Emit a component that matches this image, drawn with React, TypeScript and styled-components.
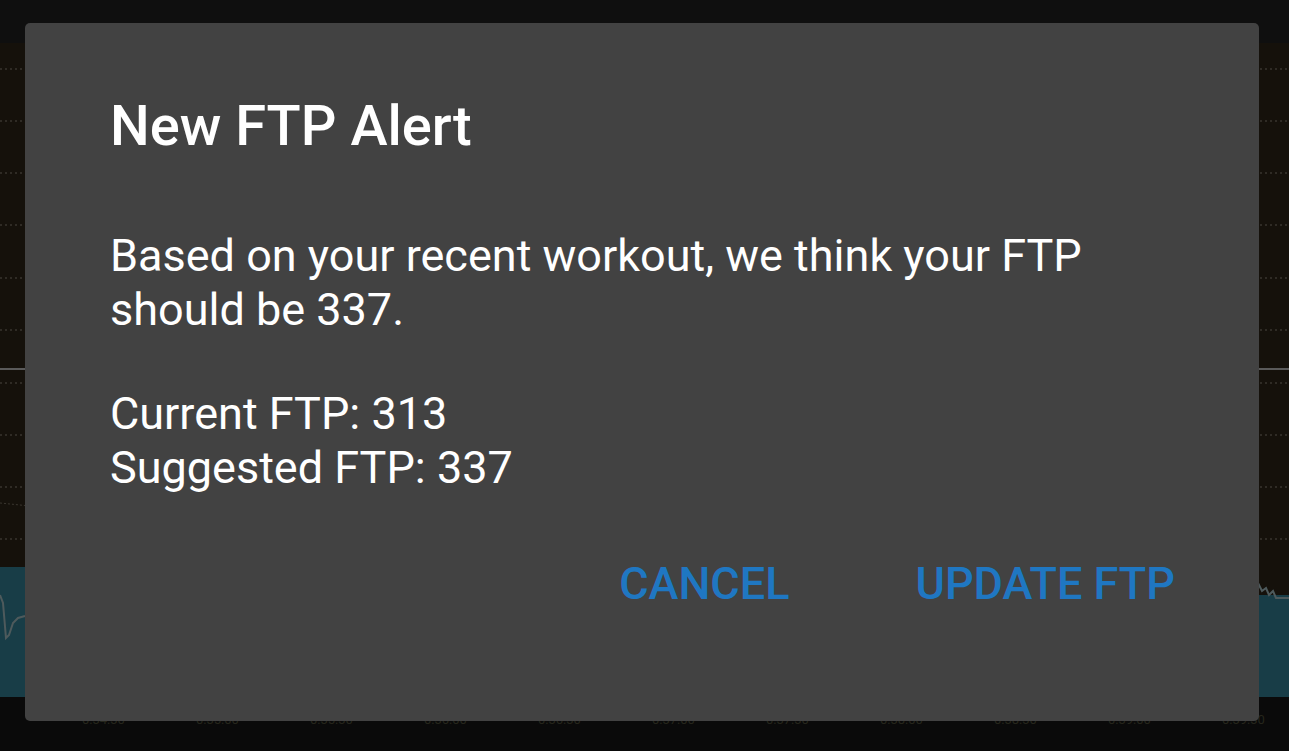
import styled, { createGlobalStyle } from "styled-components";

const GlobalStyle = createGlobalStyle`
    html, body {
        margin: 0;
        padding: 0;
        background: #0e0e0e;
    }
    * {
        box-sizing: border-box;
    }
`;

const Screen = styled.div`
    position: relative;
    display: flex;
    flex-direction: column;
    width: 1289px;
    height: 751px;
    overflow: hidden;
    font-family: Roboto, "Noto Sans", sans-serif;
    background-color: #0e0e0e;
`;
const TopBar = styled.div`
    height: 43px;
    flex-shrink: 0;
    background-color: #0f0f0f;
`;
const ChartArea = styled.div`
    flex: 1;
    background-color: #15110b;
    svg {
        display: block;
    }
`;
const TimeAxis = styled.div`
    display: flex;
    height: 54px;
    flex-shrink: 0;
    padding-left: 82px;
    gap: 66px;
    background-color: #0a0a0a;
`;
const TimeLabel = styled.span`
    width: 48px;
    padding-top: 15px;
    font-size: 13px;
    color: #26261c;
`;
const Overlay = styled.div`
    position: absolute;
    inset: 0;
    display: flex;
    padding: 23px 30px 30px 25px;
`;
const Dialog = styled.div`
    flex: 1;
    display: flex;
    flex-direction: column;
    padding: 70px 84px 0px 85px;
    border-radius: 5px;
    background-color: #424242;
    color: #ffffff;
`;
const Title = styled.h1`
    margin: 0;
    font-size: 56px;
    line-height: 66px;
    font-weight: 500;
`;
const Message = styled.p<{ $gap: number }>`
    margin: ${(props) => props.$gap}px 0 0 0;
    font-size: 45px;
    line-height: 54px;
    font-weight: 400;
`;
const Actions = styled.div`
    display: flex;
    justify-content: flex-end;
    gap: 126px;
    margin-top: 62px;
`;
const ActionBtn = styled.button`
    padding: 0;
    border: none;
    background: none;
    font-family: Roboto, "Noto Sans", sans-serif;
    font-size: 45px;
    line-height: 54px;
    font-weight: 500;
    text-transform: uppercase;
    color: #1f77c2;
`;

const gridRows = [26, 78, 130, 182, 235, 287, 340, 392, 444, 496];
const times = ["0:34:30", "0:35:00", "0:35:30", "0:36:00", "0:36:30", "0:37:00", "0:37:30", "0:38:00", "0:38:30", "0:39:00", "0:39:30"];

function BackdropChart() {
    return (
        <svg width={1289} height={654} viewBox="0 0 1289 654">
            {gridRows.map((y) => (
                <line key={y} x1={0} x2={1289} y1={y} y2={y} stroke="#4a4640" strokeWidth={1} strokeDasharray="2 3" />
            ))}
            <line x1={0} x2={1289} y1={326} y2={326} stroke="#5a5a5a" strokeWidth={2} />
            <path d="M0 524 L40 524 L40 654 L0 654 Z" fill="#183d47" />
            <path d="M0 552 L3 560 L6 595 L9 592 L13 580 L18 575 L25 573" fill="none" stroke="#4e5a5c" strokeWidth={2} />
            <path d="M1240 552 L1289 552 L1289 654 L1240 654 Z" fill="#183d47" />
            <path d="M1258 540 L1262 548 L1266 545 L1269 552 L1273 548 L1276 555 L1289 555" fill="none" stroke="#4e5a5c" strokeWidth={2} />
            <path d="M0 460 L30 463" fill="none" stroke="#3a362f" strokeWidth={1} strokeDasharray="2 2" />
        </svg>
    );
}

export default function App() {
    return (
        <>
            <GlobalStyle />
            <Screen>
                <TopBar />
                <ChartArea>
                    <BackdropChart />
                </ChartArea>
                <TimeAxis>
                    {times.map((t) => (
                        <TimeLabel key={t}>{t}</TimeLabel>
                    ))}
                </TimeAxis>
                <Overlay>
                    <Dialog>
                        <Title>New FTP Alert</Title>
                        <Message $gap={70}>
                            Based on your recent workout, we think your FTP
                            <br />
                            should be 337.
                        </Message>
                        <Message $gap={50}>
                            Current FTP: 313
                            <br />
                            Suggested FTP: 337
                        </Message>
                        <Actions>
                            <ActionBtn>Cancel</ActionBtn>
                            <ActionBtn>Update FTP</ActionBtn>
                        </Actions>
                    </Dialog>
                </Overlay>
            </Screen>
        </>
    );
}
